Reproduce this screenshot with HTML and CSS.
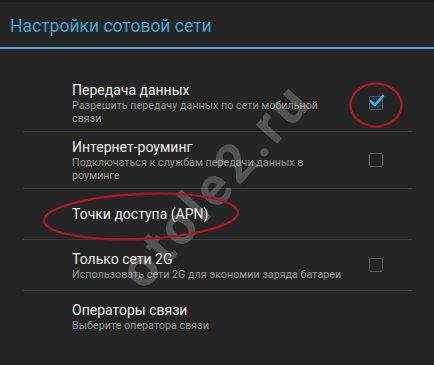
FILE: index.html
```html
<!DOCTYPE html>
<html lang="ru">
<head>
<meta charset="utf-8">
<title>Настройки сотовой сети</title>
<link rel="stylesheet" href="styles.css">
</head>
<body>
<div class="screen">
  <header class="header"><h1 class="header-title">Настройки сотовой сети</h1></header>
  <ul class="list">
    <li class="row row-first">
      <div class="text">
        <div class="title">Передача данных</div>
        <div class="summary">Разрешить передачу данных по сети мобильной<br>связи</div>
      </div>
      <span class="check checked">
        <svg class="tick" width="16" height="14" viewBox="0 0 16 14"><path d="M2 7.5 L6 11 L14 2" fill="none" stroke="#3fb4e4" stroke-width="2.6" stroke-linecap="round" stroke-linejoin="round"/></svg>
      </span>
    </li>
    <li class="row">
      <div class="text">
        <div class="title">Интернет-роуминг</div>
        <div class="summary">Подключаться к службам передачи данных в<br>роуминге</div>
      </div>
      <span class="check"></span>
    </li>
    <li class="row">
      <div class="text">
        <div class="title">Точки доступа (APN)</div>
      </div>
    </li>
    <li class="row">
      <div class="text">
        <div class="title">Только сети 2G</div>
        <div class="summary">Использовать сети 2G для экономии заряда батареи</div>
      </div>
      <span class="check"></span>
    </li>
    <li class="row row-last">
      <div class="text">
        <div class="title">Операторы связи</div>
        <div class="summary">Выберите оператора связи</div>
      </div>
    </li>
  </ul>

  <div class="watermark">otole2.ru</div>

  <svg class="marks" width="434" height="365" viewBox="0 0 434 365">
    <ellipse cx="376" cy="105" rx="25.5" ry="21.5" fill="none" stroke="#a8162a" stroke-width="2.4"/>
    <ellipse cx="141" cy="216.5" rx="97" ry="22.5" fill="none" stroke="#a8162a" stroke-width="2.4" transform="rotate(-2.5 141 216.5)"/>
  </svg>
</div>
</body>
</html>
```

FILE: styles.css
```css
* { box-sizing: border-box; }
html, body { margin: 0; padding: 0; }
body {
  background: #242424;
  font-family: Roboto, "Noto Sans", "Liberation Sans", sans-serif;
  width: 434px;
  height: 365px;
  overflow: hidden;
}
.screen {
  position: relative;
  width: 434px;
  height: 365px;
  background: #252525;
  border-top: 2px solid #1b1b1b;
}
.header {
  height: 47px;
  padding: 3px 10px 0;
  display: flex;
  align-items: center;
  border-bottom: 2px solid #55abd4;
}
.header-title {
  margin: 0;
  font-size: 17.5px;
  font-weight: 400;
  color: #43a4cb;
  line-height: 21px;
}
.list {
  list-style: none;
  margin: 0;
  padding: 26px 22px 0 23px;
}
.row {
  display: flex;
  align-items: center;
  min-height: 51px;
  padding: 6px 29px 6px 49px;
  border-bottom: 1px solid #3a3a3a;
}
.row-first { min-height: 57px; }
.row-last { border-bottom: none; }
.text { flex: 1; min-width: 0; }
.title {
  font-size: 14px;
  line-height: 18px;
  color: #ebebeb;
}
.summary {
  font-size: 10.75px;
  line-height: 13px;
  color: #9a9a9a;
  white-space: nowrap;
}
.check {
  position: relative;
  flex: none;
  width: 14px;
  height: 14px;
  margin-left: 8px;
  border: 1.5px solid #555;
  border-radius: 1px;
}
.check.checked {
  border-color: #3b5566;
  background: #263038;
}
.tick {
  position: absolute;
  left: -1px;
  top: -3px;
}
.watermark {
  position: absolute;
  left: 215px;
  top: 183px;
  transform: translate(-50%, -50%) rotate(-48deg);
  font-size: 54px;
  font-weight: 700;
  letter-spacing: 4px;
  color: rgba(205, 205, 205, 0.28);
  white-space: nowrap;
  pointer-events: none;
}
.marks {
  position: absolute;
  left: 0;
  top: -2px;
  pointer-events: none;
}
```
